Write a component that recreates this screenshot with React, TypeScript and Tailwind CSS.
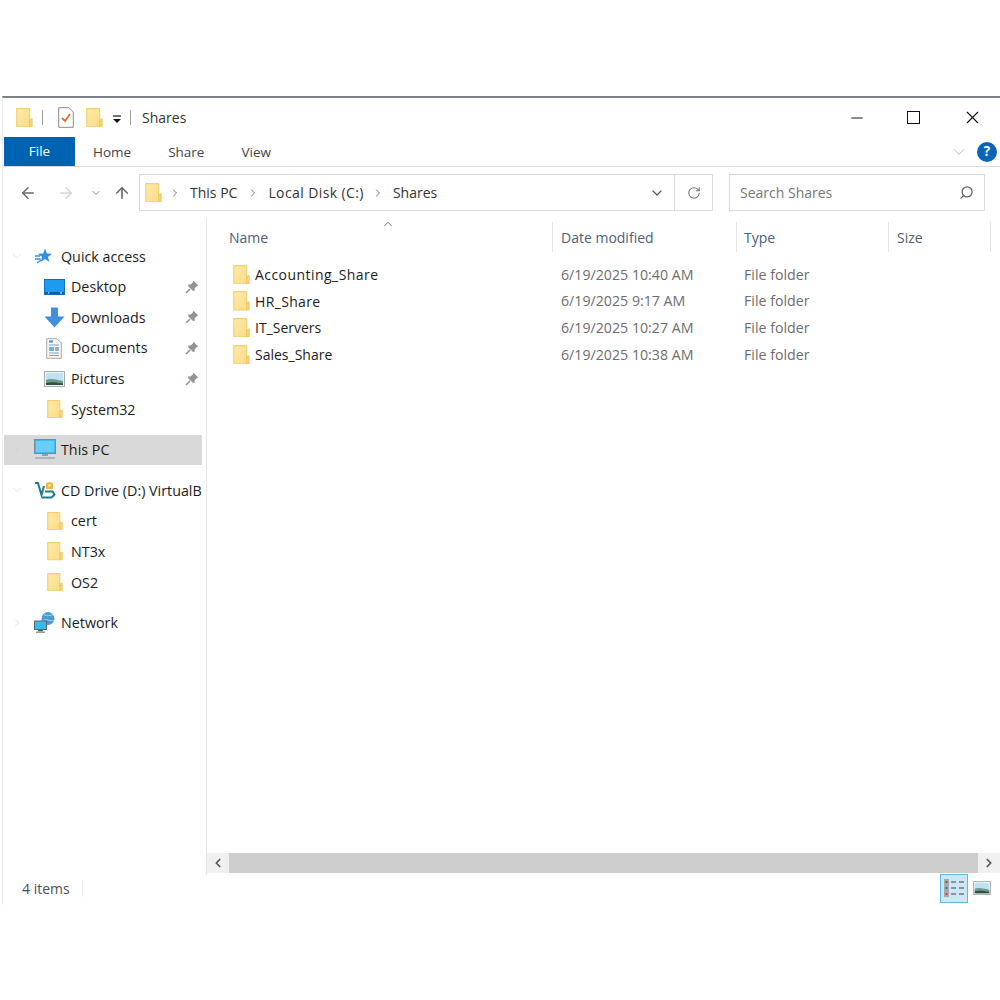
import { ArrowLeft, ArrowRight, ArrowUp, ChevronDown, ChevronRight, ChevronUp, ChevronLeft, RotateCw, Search, X, Minus } from 'lucide-react';

function Folder({ size = 18 }: { size?: number }) {
  return (
    <svg width={size} height={size * 1.15} viewBox="0 0 18 21" className="shrink-0">
      <defs>
        <linearGradient id="fg" x1="0" y1="0" x2="1" y2="1">
          <stop offset="0" stopColor="#fdeaa8" />
          <stop offset="1" stopColor="#fbdc88" />
        </linearGradient>
      </defs>
      <path d="M0.7 0.7H14.5V20.3H0.7Z" fill="url(#fg)" stroke="#f3cf70" strokeWidth="1.2" />
      <path d="M14.5 12.5L17.2 11.5V20.3H14.5Z" fill="#f8d678" stroke="#eec561" strokeWidth="1" />
    </svg>
  );
}

function Pin() {
  return (
    <svg width="14" height="14" viewBox="0 0 14 14">
      <path d="M8.5 0.8L13.2 5.5L11.6 6.2L9.6 8.6L9.6 11L7.8 10.8L3.2 6.2L3.2 4.4L5.6 4.4L7.8 2.4Z" fill="#8f9499" />
      <path d="M5 9L1 13" stroke="#8f9499" strokeWidth="1.6" />
    </svg>
  );
}

function StarIcon() {
  return (
    <svg width="19" height="18" viewBox="0 0 19 18">
      <path d="M11 1.5L12.8 6.6L18.1 6.7L13.9 9.9L15.4 15.1L11 12L6.6 15.1L8.1 9.9L3.9 6.7L9.2 6.6Z" fill="#2f8fe0" />
      <path d="M1 9H6M1 12H6.5M3 16L7 13" stroke="#2f8fe0" strokeWidth="1.3" />
    </svg>
  );
}

function DesktopIcon() {
  return (
    <svg width="21" height="16" viewBox="0 0 21 16">
      <rect x="0.5" y="0.5" width="20" height="15" fill="#1e9af0" stroke="#0f6fb8" />
      <rect x="1" y="13" width="19" height="2" fill="#0b5fa0" />
      <rect x="4" y="13.4" width="1.4" height="1" fill="#fff" />
      <rect x="16" y="13.4" width="2" height="1" fill="#fff" />
    </svg>
  );
}

function DownloadIcon() {
  return (
    <svg width="21" height="21" viewBox="0 0 21 21">
      <path d="M7 0.5H14V9.5H20.5L10.5 20.5L0.5 9.5H7Z" fill="#3f8fdb" />
    </svg>
  );
}

function DocIcon() {
  return (
    <svg width="16" height="21" viewBox="0 0 16 21" className="ml-[2px]">
      <path d="M0.7 0.7H11L15.3 5V20.3H0.7Z" fill="#f6f6f6" stroke="#a9a9a9" />
      <path d="M3 3.5H7" stroke="#3f8fdb" strokeWidth="2" />
      <path d="M3 7H13M3 15H13M3 17.5H13" stroke="#7ba4c4" strokeWidth="1.2" />
      <rect x="3" y="9" width="5" height="4" fill="#6fb3dd" />
      <rect x="9" y="9" width="4" height="4" fill="#9fb0a8" />
    </svg>
  );
}

function PictureIcon({ width = 21, height = 16 }: { width?: number; height?: number }) {
  return (
    <svg width={width} height={height} viewBox="0 0 21 16">
      <rect x="0.5" y="0.5" width="20" height="15" fill="#f2f2f2" stroke="#a9a9a9" />
      <rect x="2" y="2" width="17" height="12" fill="#bfe0f5" />
      <path d="M2 9C6 7 10 8 19 10V14H2Z" fill="#6d9a86" />
      <path d="M2 12C8 10.5 12 11.5 19 12.5V14H2Z" fill="#2f5044" />
    </svg>
  );
}

function PcIcon() {
  return (
    <svg width="22" height="21" viewBox="0 0 22 21">
      <rect x="0.5" y="0.5" width="21" height="14" fill="#3eb8f0" stroke="#7e8b94" />
      <rect x="2" y="2" width="18" height="11" fill="#67cff7" />
      <rect x="8" y="15" width="6" height="2" fill="#8ea0ac" />
      <rect x="1" y="18" width="20" height="2" fill="#a7b6c1" />
    </svg>
  );
}

function VBoxIcon() {
  return (
    <svg width="22" height="18" viewBox="0 0 22 18" fill="none">
      <path d="M1 2H4L7.5 14L10 5" stroke="#1f7a8c" strokeWidth="2" />
      <path d="M8 16.5H17.5L20.5 13.5L18.5 10.5H11" stroke="#1f7a8c" strokeWidth="2" />
      <path d="M12 8V3C12 0.5 19 0.5 19 3V8Z" fill="#f4b33f" />
      <rect x="14.5" y="3.5" width="2" height="2" fill="#fff" />
    </svg>
  );
}

function NetworkIcon() {
  return (
    <svg width="21" height="22" viewBox="0 0 21 22">
      <circle cx="14" cy="6.5" r="6.5" fill="#4a9ad6" />
      <path d="M10 2.5C13 4.5 16 3.5 19 2.5M9 8.5C13 6.5 16 9.5 20 8.5" stroke="#a9d7f2" strokeWidth="1" fill="none" />
      <rect x="0.5" y="9" width="12" height="8.5" fill="#3eb8f0" stroke="#59646c" />
      <rect x="4" y="18" width="5" height="1.5" fill="#59646c" />
      <rect x="2" y="19.5" width="9" height="1.5" fill="#8ea0ac" />
    </svg>
  );
}

function NavRow({ icon, label, pin, indent, expander, selected, gap }: {
  icon: React.ReactNode; label: string; pin?: boolean; indent?: boolean; expander?: 'open' | 'closed'; selected?: boolean; gap?: boolean;
}) {
  return (
    <div className={`h-[30.6px] flex items-center relative text-[#1c1c1c] whitespace-nowrap ${selected ? 'bg-[#d9d9d9]' : ''} ${gap ? 'mt-[10px]' : ''}`}>
      <div className="w-[14px] ml-[6px] shrink-0 flex justify-center">
        {expander === 'open' && <ChevronDown size={14} strokeWidth={1.5} className="text-[#e0e0e0]" />}
        {expander === 'closed' && <ChevronRight size={14} strokeWidth={1.5} className={selected ? 'text-[#cfcfcf]' : 'text-[#e0e0e0]'} />}
      </div>
      <div className={`${indent ? 'ml-[20px]' : 'ml-[10px]'} w-[27px] shrink-0 flex items-center`}>{icon}</div>
      <span>{label}</span>
      {pin && <div className="ml-auto mr-[3px]"><Pin /></div>}
    </div>
  );
}

function NavFolder() {
  return <div className="ml-[3px]"><Folder size={16} /></div>;
}

function HeaderCell({ label, className }: { label: string; className: string }) {
  return (
    <div className={`h-[30px] flex items-center text-[#4c607a] ${className}`}>{label}</div>
  );
}

const files = [
  { name: 'Accounting_Share', date: '6/19/2025 10:40 AM', track: 'tracking-[0.45px]' },
  { name: 'HR_Share', date: '6/19/2025 9:17 AM', track: 'tracking-[0.35px]' },
  { name: 'IT_Servers', date: '6/19/2025 10:27 AM', track: '' },
  { name: 'Sales_Share', date: '6/19/2025 10:38 AM', track: '' },
];

export default function App() {
  return (
    <div className="w-[1000px] h-[1000px] bg-white pt-[96px] overflow-hidden font-['Open_Sans','Noto_Sans',sans-serif] text-[14px]">
      <div className="h-[809px] border-t-2 border-[#7a8088] flex flex-col ml-[2px] border-l border-l-[#eeeeee]">

        {/* Title bar */}
        <div className="h-[39px] flex items-center shrink-0">
          <div className="ml-[13px]"><Folder size={17} /></div>
          <div className="w-px h-[15px] bg-[#a0a0a0] ml-[9px]" />
          <svg width="16" height="21" viewBox="0 0 16 21" className="ml-[15px]">
            <path d="M0.7 0.7H11L15.3 5V20.3H0.7Z" fill="#fff" stroke="#8a8a8a" />
            <path d="M4 11L7 14L12 7" stroke="#e8702a" strokeWidth="1.8" fill="none" />
          </svg>
          <div className="ml-[12px]"><Folder size={17} /></div>
          <svg width="10" height="9" viewBox="0 0 10 9" className="ml-[9px] mt-[3px]">
            <path d="M1 1H9" stroke="#111" strokeWidth="1.2" />
            <path d="M1 4H9L5 8Z" fill="#111" />
          </svg>
          <div className="w-px h-[15px] bg-[#a0a0a0] ml-[8px]" />
          <span className="ml-[11px] text-[#333]">Shares</span>
          <div className="ml-auto flex items-center">
            <Minus size={18} strokeWidth={1.3} className="text-[#111] mr-[41px]" />
            <div className="w-[13px] h-[13px] border-[1.5px] border-[#111] mr-[42px]" />
            <X size={21} strokeWidth={1.3} className="text-[#111] mr-[17px]" />
          </div>
        </div>

        {/* Ribbon tabs */}
        <div className="h-[30px] flex items-stretch border-b border-[#dadbdc] shrink-0 pl-[1px] text-[13.5px]">
          <div className="w-[71px] bg-[#0063b1] text-white flex items-center justify-center">File</div>
          <div className="ml-[18px] pt-[2px] flex items-center text-[#444]">Home</div>
          <div className="ml-[37px] pt-[2px] flex items-center text-[#444]">Share</div>
          <div className="ml-[37px] pt-[2px] flex items-center text-[#444]">View</div>
          <div className="ml-auto flex items-center">
            <ChevronDown size={18} strokeWidth={1.3} className="text-[#b9b9b9] mr-[9px]" />
            <div className="w-[20px] h-[20px] rounded-full bg-[#0a64b8] text-white font-bold flex items-center justify-center mr-[3px]">?</div>
          </div>
        </div>

        {/* Address bar */}
        <div className="h-[51px] flex items-center shrink-0">
          <ArrowLeft size={18} strokeWidth={2} className="text-[#6b6b6b] ml-[16px]" />
          <ArrowRight size={18} strokeWidth={2} className="text-[#d4d4d4] ml-[20px]" />
          <ChevronDown size={12} strokeWidth={2} className="text-[#8a8a8a] ml-[15px]" />
          <ArrowUp size={18} strokeWidth={2.2} className="text-[#6b6b6b] ml-[11px]" />
          <div className="ml-[8px] w-[574px] h-[37px] border border-[#d9d9d9] flex items-center text-[#333]">
            <div className="ml-[5px]"><Folder size={17} /></div>
            <ChevronRight size={12} strokeWidth={2} className="text-[#777] ml-[7px]" />
            <span className="ml-[9px]">This PC</span>
            <ChevronRight size={12} strokeWidth={2} className="text-[#777] ml-[10px]" />
            <span className="ml-[9px] tracking-[0.4px]">Local Disk (C:)</span>
            <ChevronRight size={12} strokeWidth={2} className="text-[#777] ml-[8px]" />
            <span className="ml-[9px]">Shares</span>
            <ChevronDown size={16} strokeWidth={1.8} className="text-[#555] ml-auto mr-[9px]" />
            <div className="w-[38px] h-full border-l border-[#d9d9d9] flex items-center justify-center">
              <RotateCw size={14} strokeWidth={1.8} className="text-[#777]" />
            </div>
          </div>
          <div className="ml-[16px] w-[256px] h-[37px] border border-[#d9d9d9] flex items-center text-[#767676] pl-[10px]">
            <span>Search Shares</span>
            <Search size={15} strokeWidth={2.2} className="text-[#666] ml-auto mr-[10px] -scale-x-100" />
          </div>
        </div>

        {/* Body */}
        <div className="flex-1 flex min-h-0">
          <div className="w-[204px] shrink-0 border-r border-[#e8e8e8] pt-[23px]">
            <div className="w-[198px] ml-[1px] text-[14.3px]">
              <NavRow icon={<StarIcon />} label="Quick access" expander="open" />
              <NavRow icon={<DesktopIcon />} label="Desktop" pin indent />
              <NavRow icon={<DownloadIcon />} label="Downloads" pin indent />
              <NavRow icon={<DocIcon />} label="Documents" pin indent />
              <NavRow icon={<PictureIcon />} label="Pictures" pin indent />
              <NavRow icon={<NavFolder />} label="System32" indent />
              <NavRow icon={<PcIcon />} label="This PC" expander="closed" selected gap />
              <NavRow icon={<VBoxIcon />} label="CD Drive (D:) VirtualB" expander="open" gap />
              <NavRow icon={<NavFolder />} label="cert" indent />
              <NavRow icon={<NavFolder />} label="NT3x" indent />
              <NavRow icon={<NavFolder />} label="OS2" indent />
              <NavRow icon={<NetworkIcon />} label="Network" expander="closed" gap />
            </div>
          </div>

          <div className="flex-1 min-w-0 flex flex-col">
            <div className="flex-1 pt-[4px] relative">
              <ChevronUp size={14} strokeWidth={1.8} className="absolute left-[174px] -top-px text-[#8a8a8a]" />
              <div className="flex">
                <HeaderCell label="Name" className="w-[346px] pl-[22px] border-r border-[#e5e5e5]" />
                <HeaderCell label="Date modified" className="w-[184px] pl-[8px] border-r border-[#e5e5e5]" />
                <HeaderCell label="Type" className="w-[152px] pl-[7px] border-r border-[#e5e5e5]" />
                <HeaderCell label="Size" className="w-[102px] pl-[8px] border-r border-[#e5e5e5]" />
              </div>
              <div className="pt-[9px]">
                {files.map((f) => (
                  <div key={f.name} className="h-[26.7px] flex items-center">
                    <div className="w-[346px] pl-[26px] flex items-center text-[#1c1c1c]">
                      <Folder size={17} />
                      <span className={`ml-[5px] ${f.track}`}>{f.name}</span>
                    </div>
                    <div className="w-[184px] pl-[8px] text-[#6d6d6d] text-[14.2px]">{f.date}</div>
                    <div className="w-[152px] pl-[7px] text-[#6d6d6d] text-[14.2px]">File folder</div>
                  </div>
                ))}
              </div>
            </div>

            {/* Horizontal scrollbar */}
            <div className="h-[20px] flex shrink-0 mb-[2px] bg-[#f0f0f0]">
              <div className="w-[22px] flex items-center justify-center">
                <ChevronLeft size={14} strokeWidth={3} className="text-[#555]" />
              </div>
              <div className="flex-1 bg-[#cdcdcd]" />
              <div className="w-[22px] flex items-center justify-center">
                <ChevronRight size={14} strokeWidth={3} className="text-[#555]" />
              </div>
            </div>
          </div>
        </div>

        {/* Status bar */}
        <div className="h-[30px] pb-[4px] flex items-center shrink-0 text-[#4a4f5c]">
          <span className="ml-[19px]">4 items</span>
          <div className="w-px h-[17px] bg-[#f0f0f0] ml-[12px]" />
          <div className="ml-auto w-[28px] h-[29px] shrink-0 bg-[#cce8f8] border border-[#60b8e6] flex items-center justify-center">
            <svg width="20" height="18" viewBox="0 0 20 18">
              <rect x="0" y="0" width="5" height="18" fill="#a8a8a8" />
              <rect x="1.5" y="2" width="2" height="2" fill="#3a7a4a" />
              <rect x="1.5" y="8" width="2" height="2" fill="#3a6ad0" />
              <rect x="1.5" y="14" width="2" height="2" fill="#e04040" />
              <path d="M7 3H12M15 3H20M7 9H12M15 9H20M7 15H12M15 15H20" stroke="#777" strokeWidth="1.5" />
            </svg>
          </div>
          <div className="ml-[5px] mr-[9px]"><PictureIcon width={18} height={14} /></div>
        </div>
      </div>
    </div>
  );
}
